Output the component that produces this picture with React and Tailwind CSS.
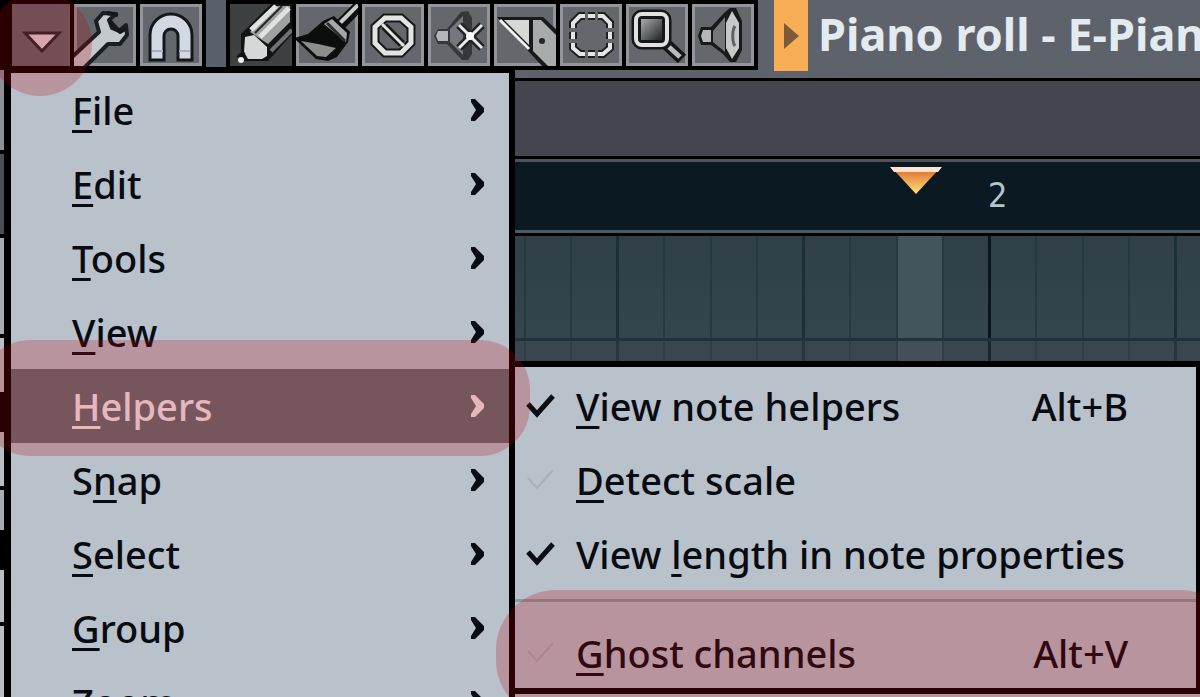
import React, { useState } from 'react';

const menuItems = ['File', 'Edit', 'Tools', 'View', 'Helpers', 'Snap', 'Select', 'Group', 'Zoom'];

// position of the underlined letter, where it is not the first one
const mnemonics = { Snap: 1, 'View length in note properties': 5 };

const helperItems = [
  { label: 'View note helpers', shortcut: 'Alt+B', checked: true },
  { label: 'Detect scale', checked: false },
  { label: 'View length in note properties', checked: true },
  { label: 'Ghost channels', shortcut: 'Alt+V', checked: false, separated: true }
];

const WrenchIcon = () => (
  <svg viewBox="0 0 62 62" className="size-full" strokeLinejoin="round">
    <path d="M-3 54L25 28L22 17L29 9L42 10L35 16L38 24L45 27L52 21L53 31L46 40L34 40L10 64L-3 66Z" fill="#c3c9cc" stroke="#1a1e22" strokeWidth="4" />
    <path d="M33 9L44 11M36 17L46 28L51 25" stroke="#14181c" strokeWidth="4" fill="none" />
  </svg>
);

const MagnetIcon = () => (
  <svg viewBox="0 0 62 62" className="size-full" stroke="#14181c" strokeWidth="3">
    <path d="M10 56V31a21 21 0 0 1 42 0V56H38V32a7 7 0 0 0-14 0V56Z" fill="#d3d9e2" />
    <path d="M12 47H23M39 47H50" stroke="#a9b0ba" strokeWidth="2" />
  </svg>
);

const PencilIcon = () => (
  <svg viewBox="0 0 62 62" className="size-full" strokeLinejoin="round">
    <path d="M11 30L41 0H64V28L38 57H11Z" fill="#111415" />
    <path d="M20 28L46 2H60V18L38 40Z" fill="#9ea1a0" />
    <path d="M21 26L46 2M30 33L59 4" stroke="#e0e2e0" strokeWidth="5" />
    <path d="M25 29L52 2" stroke="#222525" strokeWidth="2" />
    <path d="M41 47L62 26" stroke="#6f7372" strokeWidth="4" />
    <path d="M15 33L24 31L37 43V52L32 55H18L14 48Z" fill="#d4d8d6" />
    <path d="M14 48L8 54" stroke="#111415" strokeWidth="4" />
    <circle cx="11" cy="56" r="3" fill="#eef0ef" />
  </svg>
);

const BrushIcon = () => (
  <svg viewBox="0 0 62 62" className="size-full" strokeLinejoin="round">
    <path d="M45 20L64 1" stroke="#0c0e0e" strokeWidth="11" />
    <path d="M44 19L62 1" stroke="#c9cbca" strokeWidth="4" />
    <path d="M-2 34L12 30L27 17L38 12L54 28L52 38L41 53L32 57L20 55Z" fill="#0c0e0e" />
    <path d="M5 37L22 40L40 44L30 53L21 52Z" fill="#8a8e8d" />
    <path d="M28 20L36 15L51 29L50 38Z" fill="#a5a8a8" />
    <path d="M31 19L49 37" stroke="#2a2d2d" strokeWidth="3" />
  </svg>
);

const CancelIcon = () => (
  <svg viewBox="0 0 62 62" className="size-full" fill="none">
    <path d="M23 14H39L49 23V39L39 49H23L13 39V23Z" stroke="#16191a" strokeWidth="9" />
    <path d="M22 22L40 40" stroke="#16191a" strokeWidth="8" />
    <path d="M23 14H39L49 23V39L39 49H23L13 39V23Z" stroke="#e2e4e3" strokeWidth="5" />
    <path d="M20 20L42 42" stroke="#e2e4e3" strokeWidth="3" />
  </svg>
);

const MuteIcon = () => (
  <svg viewBox="0 0 62 62" className="size-full" strokeLinejoin="round">
    <path d="M10 25H19L33 8L40 7L44 14V50L40 56H34L19 40H10L6 32Z" fill="#35383b" />
    <path d="M10 27H20V37H10L8 32Z" fill="#b3b7ba" />
    <path d="M22 25L35 12V51L22 38Z" fill="#74787c" />
    <path d="M31 21L54 44M54 21L31 44" stroke="#222526" strokeWidth="8" />
    <path d="M31 21L54 44M54 21L31 44" stroke="#e8eae9" strokeWidth="3" />
    <circle cx="42" cy="32" r="4" fill="#fff" />
  </svg>
);

const KnifeIcon = () => (
  <svg viewBox="0 0 62 62" className="size-full">
    <path d="M3 13H49L64 27V64H50L36 49Z" fill="#17191a" />
    <path d="M10 16H35V41Z" fill="#d6d8d7" />
    <path d="M6 16L35 45" stroke="#f2f3f2" strokeWidth="3" />
    <path d="M39 16H47L62 31V62H54L39 47Z" fill="#a8abab" />
    <circle cx="48" cy="37" r="3" fill="#232627" />
  </svg>
);

const SelectIcon = () => (
  <svg viewBox="0 0 62 62" className="size-full" fill="none">
    <path d="M13 24V19L20 12H25M28 12H35M38 12H43L50 19V24M50 28V35M50 39V44L43 50H38M35 50H28M25 50H20L13 44V39M13 35V28" stroke="#1d2022" strokeWidth="8" />
    <path d="M13 24V19L20 12H25M28 12H35M38 12H43L50 19V24M50 28V35M50 39V44L43 50H38M35 50H28M25 50H20L13 44V39M13 35V28" stroke="#e4e6e6" strokeWidth="4" />
  </svg>
);

const ZoomIcon = () => (
  <svg viewBox="0 0 62 62" className="size-full">
    <defs>
      <linearGradient id="lens" x1="0" y1="0" x2="1" y2="1">
        <stop offset="0" stopColor="#a9acac" />
        <stop offset="1" stopColor="#1f2223" />
      </linearGradient>
    </defs>
    <path d="M39 39L56 55" stroke="#141617" strokeWidth="12" />
    <path d="M43 43L54 53" stroke="#b9bcbc" strokeWidth="5" />
    <rect x="10" y="10" width="31" height="31" rx="6" fill="#141617" stroke="#141617" strokeWidth="9" />
    <rect x="10" y="10" width="31" height="31" rx="6" fill="#141617" stroke="#e0e2e2" strokeWidth="4" />
    <rect x="15" y="15" width="21" height="21" fill="url(#lens)" />
  </svg>
);

const SpeakerIcon = () => (
  <svg viewBox="0 0 62 62" className="size-full">
    <path d="M9 23H19L32 9L38 4H44L50 17V46L44 58H38L31 50L19 41H9L6 32Z" fill="#17191b" />
    <path d="M11 26H19V38H11L9 32Z" fill="#b6b9ba" />
    <path d="M21 27L33 13V48L21 38Z" fill="#74787a" />
    <path d="M40 7L47 19V44L40 55L34 44V19Z" fill="#c6c9c9" />
    <path d="M43 22C40 26 40 38 43 42" stroke="#5d6163" strokeWidth="3" fill="none" />
  </svg>
);

const tools = [
  { name: 'Draw', Icon: PencilIcon },
  { name: 'Paint', Icon: BrushIcon },
  { name: 'Delete', Icon: CancelIcon },
  { name: 'Mute', Icon: MuteIcon },
  { name: 'Slice', Icon: KnifeIcon },
  { name: 'Select', Icon: SelectIcon },
  { name: 'Zoom', Icon: ZoomIcon },
  { name: 'Playback', Icon: SpeakerIcon }
];

const ToolButton = ({ name, Icon, active, onClick }) => (
  <button
    type="button"
    aria-label={name}
    aria-pressed={active}
    onClick={onClick}
    className={`size-[62px] shrink-0 overflow-hidden ${active ? 'bg-[#3d4142]' : 'inset-ring-3 inset-ring-[#92969a] bg-[#64686c]'}`}
  >
    <Icon />
  </button>
);

const Label = ({ text }) => {
  const at = mnemonics[text] || 0;
  return (
    <span className="whitespace-pre">
      {text.slice(0, at)}
      <span className="underline decoration-[3px] underline-offset-[5px]">{text[at]}</span>
      {text.slice(at + 1)}
    </span>
  );
};

const Arrow = () => (
  <svg viewBox="0 0 16 28" className="h-7 w-4" fill="currentColor">
    <path d="M2 3H6L15 12V16L6 25H2V22L7 14L2 6Z" />
  </svg>
);

const Check = ({ checked }) => (
  <svg viewBox="0 0 30 26" className={`h-[26px] w-[30px] shrink-0 ${checked ? 'text-[#0b0f14]' : 'text-[#a9afb5]'}`} fill="none">
    <path d="M2 11L11 21L27 3" stroke="currentColor" strokeWidth={checked ? 5 : 2} />
  </svg>
);

const Grid = () => (
  <div className="relative flex h-[125px] overflow-hidden bg-linear-to-b from-[#303f48] to-[#34474f] pl-[433px]">
    {[0, 1, 2, 3, 4].map((beat) => (
      <div key={beat} className={`flex w-[186px] shrink-0 border-r-3 ${beat === 2 ? 'border-[#0a161d]' : 'border-[#1b2f39]'}`}>
        {[0, 1, 2, 3].map((step) => (
          <div
            key={step}
            className={`flex-1 border-[#263942] ${step < 3 ? 'border-r-2' : ''} ${beat === 2 && step === 2 ? 'bg-[#43545d]' : ''}`}
          />
        ))}
      </div>
    ))}
    <div className="absolute inset-x-0 bottom-5 h-[3px] bg-[#1d333d]" />
    <div className="absolute inset-x-0 bottom-0 h-5 bg-[#4a4650]/30" />
  </div>
);

const App = () => {
  const [tool, setTool] = useState('Draw');
  const [openMenu, setOpenMenu] = useState('Helpers');
  const [helpers, setHelpers] = useState(helperItems);

  const toggleHelper = (label) => {
    setHelpers(prev => prev.map(item => (
      item.label === label ? { ...item, checked: !item.checked } : item
    )));
  };

  return (
    <div className="relative h-screen overflow-hidden bg-[#b8c0c9] font-['Noto_Sans',sans-serif]">
      {/* Toolbar */}
      <header className="flex h-[78px] items-start overflow-hidden bg-[#5e626a]">
        <div className="flex shrink-0 gap-1 bg-black py-1 pr-1 pl-3">
          <button type="button" aria-label="Menu" className="h-[62px] w-[58px] bg-[#62666b]">
            <svg viewBox="0 0 58 62" className="size-full">
              <path d="M13 29H47L30 47Z" fill="#dfd9dc" stroke="#24282c" strokeWidth="3" />
            </svg>
          </button>
          <ToolButton name="Tools" Icon={WrenchIcon} />
          <ToolButton name="Snap to grid" Icon={MagnetIcon} />
        </div>
        <div className="h-[70px] w-5 shrink-0 bg-[#56616b]" />
        <div className="flex shrink-0 gap-1 bg-black p-1">
          {tools.map(({ name, Icon }) => (
            <ToolButton key={name} name={name} Icon={Icon} active={tool === name} onClick={() => setTool(name)} />
          ))}
        </div>
        <div className="ml-4 flex h-[71px] w-[34px] shrink-0 items-center justify-center bg-[#f7ae55]">
          <svg viewBox="0 0 16 26" className="h-[26px] w-4">
            <path d="M1 0L16 13L1 26Z" fill="#7c5a3a" />
          </svg>
        </div>
        <h1 className="ml-2.5 text-[45px] leading-[68px] font-bold whitespace-nowrap text-[#e3eaf0]">
          Piano roll - E-Pian
        </h1>
      </header>

      {/* Piano roll */}
      <main>
        <div className="h-[78px] border-t-3 border-black bg-[#44454f]" />
        <div className="relative h-20 border-y-3 border-black bg-[#0b1a22]">
          <div className="h-[3px] bg-[#50515d]" />
          <div className="mt-[68px] h-[3px] bg-[#4c5a64]" />
          <svg viewBox="0 0 52 30" className="absolute top-2 left-[890px] h-[30px] w-[52px]">
            <defs>
              <linearGradient id="playhead" x1="0" y1="0" x2="0" y2="1">
                <stop offset="0" stopColor="#e0692c" />
                <stop offset="1" stopColor="#ffe37a" />
              </linearGradient>
            </defs>
            <path d="M2 1H50L26 27Z" fill="url(#playhead)" />
            <path d="M0 0H52L48 5H4Z" fill="#ffe4d2" />
          </svg>
          <span className="absolute top-4 left-[988px] font-['DejaVu_Sans_Condensed','DejaVu_Sans',sans-serif] text-[34px] leading-10 text-[#b5c4cd]">2</span>
        </div>
        <Grid />
      </main>

      {/* Keyboard edge */}
      <div className="absolute top-[70px] left-0 flex h-full w-2 flex-col gap-1 bg-black pr-1">
        <div className="h-20 bg-[#8b9095]" />
        <div className="h-20 bg-[#4a4f54]" />
        <div className="h-24 bg-[#a7acb1]" />
        <div className="h-[54px] bg-[#b9bec3]" />
        <div className="mt-9 h-[54px] bg-[#b9bec3]" />
        <div className="h-10 bg-[#a7acb1]" />
        <div className="mt-9 h-[52px] bg-[#b9bec3]" />
        <div className="h-24 bg-[#b9bec3]" />
      </div>

      {/* Main menu */}
      <nav className="absolute top-[67px] left-[5px] w-[510px] border-6 border-black bg-[#b9c1ca] text-[38px] font-medium text-[#080c12]">
        {menuItems.map((item) => (
          <button
            key={item}
            type="button"
            onClick={() => setOpenMenu(item)}
            className={`flex h-[74px] w-full items-center justify-between pr-6 pl-[61px] ${openMenu === item ? 'bg-[#636e74] text-[#f4eef2]' : ''}`}
          >
            <Label text={item} />
            <Arrow />
          </button>
        ))}
      </nav>

      {/* Helpers submenu */}
      <div role="menu" className="absolute top-[361px] right-0 left-[509px] border-6 border-r-4 border-black bg-[#b9c1ca] text-[38px] font-medium text-[#080c12]">
        {helpers.map(({ label, shortcut, checked, separated }) => (
          <div key={label}>
            {separated && <hr className="mt-2.5 mb-3 border-t-3 border-[#8f989f]" />}
            <button
              type="button"
              role="menuitemcheckbox"
              aria-checked={checked}
              onClick={() => toggleHelper(label)}
              className="flex h-[74px] w-full items-center pt-1 pr-[68px] pl-[11px]"
            >
              <Check checked={checked} />
              <span className="ml-5 flex-1 text-left whitespace-nowrap"><Label text={label} /></span>
              {shortcut && <span>{shortcut}</span>}
            </button>
          </div>
        ))}
      </div>

      {/* Red marker highlights */}
      <div className="pointer-events-none absolute -top-2 -left-3 size-[104px] rounded-full bg-[#b7000d]/23" />
      <div className="pointer-events-none absolute top-[340px] -left-5 h-[116px] w-[550px] rounded-[50px] bg-[#b7000d]/23" />
      <div className="pointer-events-none absolute top-[590px] -right-10 left-[496px] h-[130px] rounded-[60px] bg-[#b7000d]/23" />
    </div>
  );
};

export default App;
